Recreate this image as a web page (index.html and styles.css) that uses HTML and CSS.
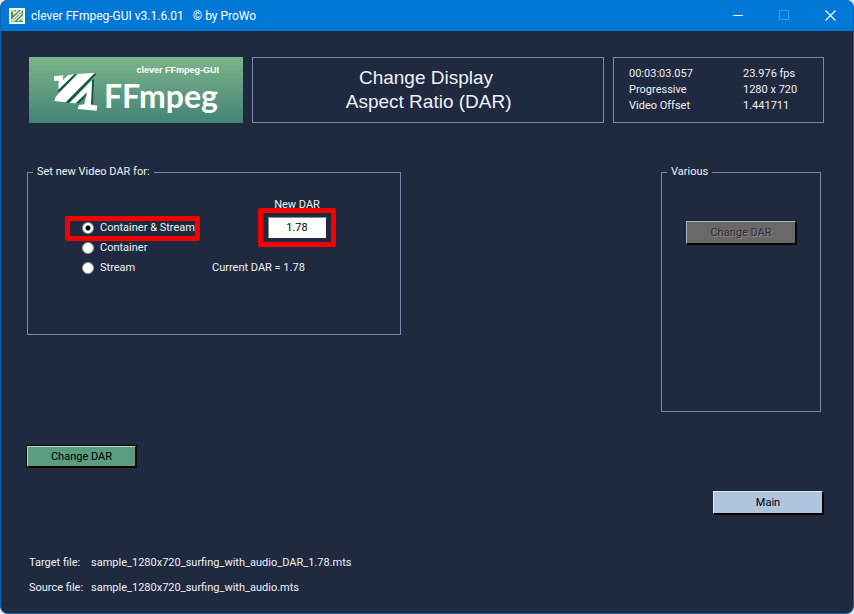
FILE: index.html
```
<!DOCTYPE html>
<html lang="en">
<head>
  <meta charset="utf-8">
  <title>clever FFmpeg-GUI</title>
  <link rel="stylesheet" href="styles.css">
</head>

<body>

  <div class="window">

    <header class="titlebar">
      <svg class="app-icon" viewBox="0 0 16 16">
        <rect width="16" height="16" fill="#fff"/>
        <rect x="2" y="2" width="12" height="12" fill="#4c9a4c"/>
        <path d="M2 3h3v3l4-4M13 2L3 12v1h2l8-8M9 13l4-4v4" fill="none" stroke="#fff" stroke-width="1.2"/>
      </svg>
      <h1>clever FFmpeg-GUI v3.1.6.01 &nbsp; © by ProWo</h1>
      <div class="window-controls">
        <button aria-label="Minimize">
          <svg width="11" height="11"><path d="M0 5.5h10" stroke="#fff"/></svg>
        </button>
        <button aria-label="Maximize" disabled>
          <svg width="11" height="11"><path d="M.5 .5h9v9h-9z" fill="none" stroke="#3a9be8"/></svg>
        </button>
        <button aria-label="Close">
          <svg width="11" height="11"><path d="M.5 .5l10 10M10.500 .5l-10 10" stroke="#fff" stroke-width="1.2"/></svg>
        </button>
      </div>
    </header>

    <main class="content">

      <section class="top">
        <div class="logo">
          <svg class="logo-mark" viewBox="24 22 138 126">
            <!-- shadow sides of the zigzag -->
            <g fill="#17553f">
              <path d="M88 32L96 32L40 88L40 76Z"/>
              <path d="M148 28L154 32L72 117L60 116Z"/>
              <path d="M141 50L147 46L144 122L138 122Z"/>
              <path d="M92 118L130 82L126 92L104 118Z"/>
            </g>
            <!-- the zigzag itself -->
            <g fill="#fff">
              <path d="M27 38L55 35L53 50L70 34L88 32L40 78L41 51L27 51Z"/>
              <path d="M98 31L150 27L62 116L28 112L31 102L40 90Z"/>
              <path d="M74 118L141 50L138 123L157 126L155 141L98 136L102 124L118 122L126 86L92 119Z"/>
            </g>
          </svg>
          <div class="logo-text">
            <span class="logo-sub">clever FFmpeg-GUI</span>
            <span class="logo-name">FFmpeg</span>
          </div>
        </div>

        <h2 class="page-title">Change Display<br>&nbsp;Aspect Ratio (DAR)</h2>

        <div class="info">
          <span>00:03:03.057</span><span>23.976 fps</span>
          <span>Progressive</span><span>1280 x 720</span>
          <span>Video Offset</span><span>1.441711</span>
        </div>
      </section>

      <section class="panels">
        <fieldset class="group dar">
          <legend>Set new Video DAR for:</legend>
          <div class="dar-body">
            <div class="options">
              <label class="marked"><input type="radio" name="target" checked>Container &amp; Stream</label>
              <label><input type="radio" name="target">Container</label>
              <label><input type="radio" name="target">Stream</label>
            </div>
            <div class="values">
              <div class="new-dar">
                <label for="newDar">New DAR</label>
                <div class="marked">
                  <input type="text" id="newDar" value="1.78">
                </div>
              </div>
              <p>Current DAR = 1.78</p>
            </div>
          </div>
        </fieldset>

        <fieldset class="group various">
          <legend>Various</legend>
          <button class="btn" disabled>Change DAR</button>
        </fieldset>
      </section>

      <section class="actions">
        <button class="btn btn-change">Change DAR</button>
        <button class="btn btn-main">Main</button>
      </section>

      <dl class="files">
        <dt>Target file:</dt><dd>sample_1280x720_surfing_with_audio_DAR_1.78.mts</dd>
        <dt>Source file:</dt><dd>sample_1280x720_surfing_with_audio.mts</dd>
      </dl>

    </main>

  </div>

</body>
</html>
```
FILE: styles.css
```
* {
  box-sizing: border-box;
}

body {
  margin: 0;
  background: #dfe6ee;
  color: #f0f2f6;
  font-family: Roboto, Arial, sans-serif;
  font-size: 11px;
  line-height: 16px;
}

button, input {
  font: inherit;
}

.window {
  display: flex;
  flex-direction: column;
  min-height: 100vh;
  border: 1px solid #0d63b0;
  border-top: none;
  border-radius: 8px;
  background: #1f2940;
  overflow: hidden;
}

/* Title bar */
.titlebar {
  display: flex;
  align-items: center;
  height: 31px;
  padding-left: 8px;
  background: #0078d7;
}

.app-icon {
  width: 16px;
  height: 16px;
  margin-right: 6px;
}

.titlebar h1 {
  flex: 1;
  margin: 0;
  color: #fff;
  font-size: 12px;
  font-weight: normal;
}

.window-controls {
  display: flex;
}

.window-controls button {
  display: flex;
  align-items: center;
  justify-content: center;
  width: 46px;
  height: 31px;
  padding: 0;
  border: none;
  background: none;
}

/* Top row */
.content {
  flex: 1;
  padding: 26px 29px 16px 28px;
}

.top {
  display: grid;
  grid-template-columns: 214px 1fr 211px;
  gap: 9px;
  height: 66px;
}

.logo {
  display: flex;
  align-items: center;
  padding-left: 24px;
  background: linear-gradient(#7ab58a, #448377);
}

.logo-mark {
  width: 46px;
  height: 42px;
  margin-top: 4px;
}

.logo-text {
  display: flex;
  flex-direction: column;
  width: 120px;
  padding-left: 5px;
  color: #fff;
}

.logo-sub {
  align-self: flex-end;
  font-family: "Liberation Sans", Arial, sans-serif;
  font-size: 9px;
  font-weight: bold;
  line-height: 12px;
}

.logo-name {
  font-family: Lato, sans-serif;
  font-size: 32px;
  font-weight: bold;
  line-height: 40px;
}

.page-title,
.info,
.group {
  border: 1px solid #7c89b0;
}

.page-title {
  display: flex;
  flex-direction: column;
  justify-content: center;
  margin: 0;
  padding-right: 4px;
  font-family: "Liberation Sans", Arial, sans-serif;
  font-size: 19px;
  font-weight: normal;
  line-height: 24px;
  text-align: center;
}

.info {
  display: grid;
  grid-template-columns: 114px 1fr;
  align-content: center;
  padding-left: 15px;
}

/* Group boxes */
.panels {
  display: flex;
  justify-content: space-between;
  align-items: flex-start;
  margin: 41px 3px 0 -2px;
}

.group {
  margin: 0;
  padding: 0;
}

.group legend {
  margin-left: 5px;
  padding: 0 4px;
}

.dar {
  width: 374px;
  height: 171px;
}

.dar-body {
  display: flex;
  padding: 15px 0 0 54px;
}

.options {
  width: 130px;
  padding-top: 23px;
}

.options label {
  display: flex;
  align-items: center;
  height: 20px;
}

.options input {
  appearance: none;
  width: 12px;
  height: 12px;
  margin: 0 6px 0 0;
  border: 1px solid #9a9a9a;
  border-radius: 50%;
  background: #fff;
}

.options input:checked {
  background: radial-gradient(circle, #000 2px, #fff 3px);
}

.values {
  padding-top: 2px;
}

.values p {
  margin: 22px 0 0;
}

.new-dar {
  display: flex;
  flex-direction: column;
  align-items: center;
  gap: 4px;
  width: 58px;
  margin-left: 56px;
}

.new-dar input {
  display: block;
  width: 58px;
  height: 21px;
  padding: 0;
  border: 1px solid #fff;
  border-top-color: #888;
  border-left-color: #888;
  background: #fff;
  color: #000;
  text-align: center;
}

/* Red marker drawn round a control */
.marked {
  position: relative;
}

.marked::after {
  content: "";
  position: absolute;
  inset: -9px -10px;
  border: 5px solid #f40000;
  border-radius: 2px;
  pointer-events: none;
}

.options .marked::after {
  inset: -2px 12px -3px -17px;
}

.various {
  width: 160px;
  height: 248px;
  text-align: center;
}

.various legend {
  text-align: left;
}

.various .btn {
  margin-top: 41px;
}

/* Buttons */
.btn {
  width: 110px;
  height: 23px;
  padding: 0;
  border: 1px solid;
  border-color: #dfe8f5 #000 #000 #dfe8f5;
  box-shadow: 1px 1px #000;
  background: #b0c4de;
  color: #000;
}

.btn:disabled {
  background: #696969;
  border-color: #aab4c4 #000 #000 #aab4c4;
  color: #303030;
  text-shadow: 1px 1px #8a8a8a;
}

.btn-change {
  width: 109px;
  height: 21px;
  border-color: #b4d8c8 #000 #000 #b4d8c8;
  box-shadow: none;
  background: #5a9e82;
  outline: 1px solid #000;
}

.actions {
  display: flex;
  justify-content: space-between;
  margin: 34px 1px 0 -2px;
}

.btn-main {
  margin-top: 45px;
}

/* File names */
.files {
  display: grid;
  grid-template-columns: 62px 1fr;
  row-gap: 9px;
  margin: 41px 0 0;
}

.files dd {
  margin: 0;
}
```
